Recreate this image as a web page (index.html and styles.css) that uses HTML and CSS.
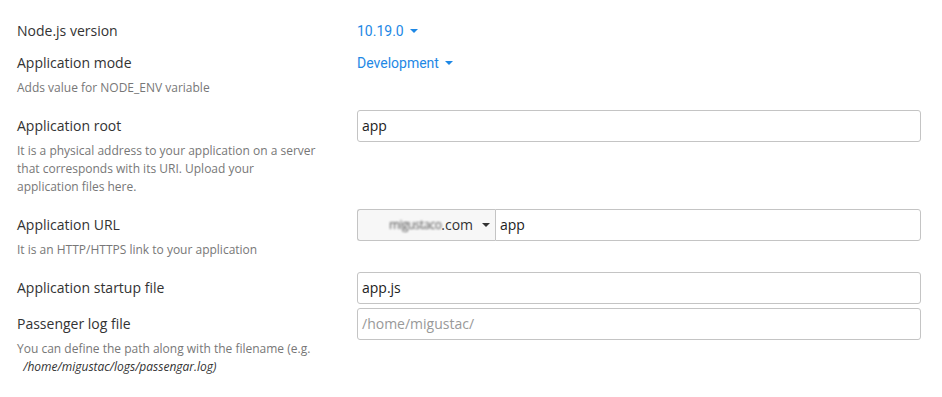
FILE: index.html
```html
<!DOCTYPE html>
<html>
<head>
<meta charset="utf-8">
<link rel="stylesheet" href="styles.css">
</head>
<body>
<form class="form">
  <div class="row row--tight">
    <div class="side"><div class="label">Node.js version</div></div>
    <div class="control"><a class="dropdown">10.19.0 <span class="caret"></span></a></div>
  </div>
  <div class="row row--tight">
    <div class="side">
      <div class="label">Application mode</div>
      <div class="help">Adds value for NODE_ENV variable</div>
    </div>
    <div class="control"><a class="dropdown">Development <span class="caret"></span></a></div>
  </div>
  <div class="row">
    <div class="side">
      <div class="label">Application root</div>
      <div class="help">It is a physical address to your application on a server that corresponds with its URI. Upload your application files here.</div>
    </div>
    <div class="control"><div class="input">app</div></div>
  </div>
  <div class="row">
    <div class="side">
      <div class="label">Application URL</div>
      <div class="help">It is an HTTP/HTTPS link to your application</div>
    </div>
    <div class="control">
      <div class="group">
        <div class="addon"><span class="blur">migustaco</span>.com<span class="caret caret--dark"></span></div>
        <div class="input input--joined">app</div>
      </div>
    </div>
  </div>
  <div class="row">
    <div class="side"><div class="label">Application startup file</div></div>
    <div class="control"><div class="input">app.js</div></div>
  </div>
  <div class="row">
    <div class="side">
      <div class="label">Passenger log file</div>
      <div class="help">You can define the path along with the filename (e.g. <em class="path">&nbsp;&nbsp;/home/migustac/logs/passengar.log)</em></div>
    </div>
    <div class="control"><div class="input input--placeholder">/home/migustac/</div></div>
  </div>
</form>
</body>
</html>
```
FILE: styles.css
```css
* { box-sizing: border-box; }
html, body { margin: 0; padding: 0; background: #fff; }
body {
  font-family: "Open Sans", "Noto Sans", sans-serif;
  color: #333;
  padding: 15px 21px 0 17px;
}
.form { display: flex; flex-direction: column; }
.row {
  display: flex;
  margin-top: 4px;
}
.row--tight { margin-top: 0; }
.side {
  width: 340px;
  flex: none;
  padding-right: 40px;
}
.control { flex: 1; min-width: 0; }
.label {
  font-size: 14px;
  line-height: 32px;
  color: #333;
}
.help {
  font-size: 12px;
  line-height: 18px;
  color: #777;
  margin-bottom: 9px;
}
.path { font-style: italic; color: #333; white-space: nowrap; }
.dropdown {
  display: inline-flex;
  align-items: center;
  gap: 6px;
  font-family: Roboto, "Open Sans", sans-serif;
  font-size: 14px;
  line-height: 32px;
  color: #1e88e5;
  cursor: pointer;
}
.caret {
  display: inline-block;
  width: 0; height: 0;
  border-left: 4px solid transparent;
  border-right: 4px solid transparent;
  border-top: 4px solid #1e88e5;
}
.caret--dark { border-top-color: #333; margin-left: 9px; }
.input {
  height: 32px;
  border: 1px solid #c4c4c4;
  border-radius: 3px;
  padding: 0 4px;
  font-size: 14px;
  line-height: 30px;
  color: #222;
  background: #fff;
}
.input--placeholder { color: #999; }
.group { display: flex; }
.addon {
  width: 138px;
  flex: none;
  height: 32px;
  border: 1px solid #c4c4c4;
  border-right: none;
  border-radius: 3px 0 0 3px;
  background: #f7f7f7;
  font-size: 14px;
  line-height: 30px;
  color: #333;
  padding-left: 31px;
  display: flex;
  align-items: center;
}
.blur { filter: blur(1.3px); color: #555; font-size: 12px; letter-spacing: -0.6px; }
.input--joined {
  flex: 1;
  border-radius: 0 3px 3px 0;
  border-left: 1px solid #c4c4c4;
}
```
